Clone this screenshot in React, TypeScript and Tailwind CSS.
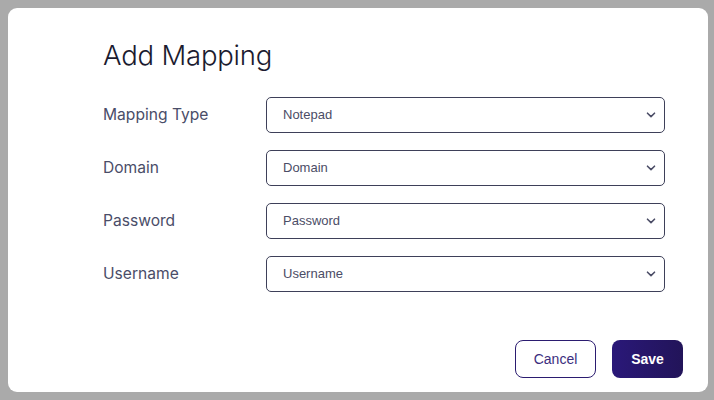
import React, { useState } from "react";

const fields = [
  { label: "Mapping Type", value: "Notepad" },
  { label: "Domain", value: "Domain" },
  { label: "Password", value: "Password" },
  { label: "Username", value: "Username" },
];

function Chevron() {
  return (
    <svg
      viewBox="0 0 10 6"
      className="pointer-events-none absolute right-[9px] top-1/2 h-[6px] w-[10px] -translate-y-1/2"
      fill="none"
      stroke="#4b4d66"
      strokeWidth="1.6"
      strokeLinecap="round"
      strokeLinejoin="round"
    >
      <path d="M1.5 1.2 5 4.6 8.5 1.2" />
    </svg>
  );
}

export default function App() {
  const [values, setValues] = useState(fields.map((f) => f.value));

  return (
    <div className="flex h-[400px] w-[714px] items-center overflow-hidden bg-[#aaaaaa] pl-[8px]">
      <div className="flex h-[384px] w-[700px] flex-col rounded-[9px] bg-white pl-[95px] pr-[25px] pt-[29px]">
        <h2 className="text-[27.5px] font-light leading-[36px] tracking-[-0.2px] text-[#1b1b2f] [font-family:Inter,'Noto_Sans',sans-serif]">
          Add Mapping
        </h2>

        <div className="mt-[24px] flex w-[562px] flex-col gap-[17px]">
          {fields.map((f, i) => (
            <div key={f.label} className="flex h-[36px] items-center">
              <label className="w-[163px] text-[15.6px] text-[#4a4d68] [font-family:Inter,'Noto_Sans',sans-serif]">
                {f.label}
              </label>
              <div className="relative h-[36px] w-[399px]">
                <select
                  value={values[i]}
                  onChange={(e) => {
                    const next = [...values];
                    next[i] = e.target.value;
                    setValues(next);
                  }}
                  className="h-full w-full appearance-none rounded-[5px] border border-[#3e4059] bg-white pl-[16px] text-[13px] text-[#4b4d66] outline-none [font-family:'Liberation_Sans',Arial,sans-serif]"
                >
                  <option>{f.value}</option>
                </select>
                <Chevron />
              </div>
            </div>
          ))}
        </div>

        <div className="mt-[48px] flex justify-end gap-[16px]">
          <button className="h-[38px] w-[81px] rounded-[8px] border border-[#2b1c70] bg-white text-[14px] font-medium text-[#3b2d7e] [font-family:'Liberation_Sans',Arial,sans-serif]">
            Cancel
          </button>
          <button className="h-[38px] w-[71px] rounded-[8px] bg-gradient-to-r from-[#2a1879] to-[#221459] text-[14px] font-bold text-white [font-family:'Liberation_Sans',Arial,sans-serif]">
            Save
          </button>
        </div>
      </div>
    </div>
  );
}
